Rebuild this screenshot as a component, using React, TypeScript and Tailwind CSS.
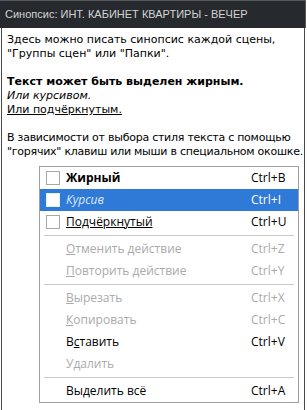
import type { ReactNode } from 'react'

type MenuRow =
  | { kind: 'sep' }
  | {
      kind: 'item'
      label: ReactNode
      shortcut?: string
      check?: boolean
      disabled?: boolean
      active?: boolean
      labelClass?: string
    }

const rows: MenuRow[] = [
  { kind: 'item', label: 'Жирный', shortcut: 'Ctrl+B', check: true, labelClass: 'font-bold' },
  { kind: 'item', label: 'Курсив', shortcut: 'Ctrl+I', check: true, active: true, labelClass: 'italic' },
  { kind: 'item', label: 'Подчёркнутый', shortcut: 'Ctrl+U', check: true, labelClass: 'underline' },
  { kind: 'sep' },
  {
    kind: 'item',
    label: (
      <>
        <span className="underline">О</span>тменить действие
      </>
    ),
    shortcut: 'Ctrl+Z',
    disabled: true,
  },
  {
    kind: 'item',
    label: (
      <>
        <span className="underline">П</span>овторить действие
      </>
    ),
    shortcut: 'Ctrl+Y',
    disabled: true,
  },
  { kind: 'sep' },
  {
    kind: 'item',
    label: (
      <>
        <span className="underline">В</span>ырезать
      </>
    ),
    shortcut: 'Ctrl+X',
    disabled: true,
  },
  {
    kind: 'item',
    label: (
      <>
        <span className="underline">К</span>опировать
      </>
    ),
    shortcut: 'Ctrl+C',
    disabled: true,
  },
  {
    kind: 'item',
    label: (
      <>
        В<span className="underline">с</span>тавить
      </>
    ),
    shortcut: 'Ctrl+V',
  },
  { kind: 'item', label: 'Удалить', disabled: true },
  { kind: 'sep' },
  { kind: 'item', label: 'Выделить всё', shortcut: 'Ctrl+A' },
]

function ContextMenu() {
  return (
    <div className="ml-[37px] mt-[7px] w-[260px] border border-[#a0a0a0] bg-white font-['Open_Sans',sans-serif] text-[12px]">
      {rows.map((row, i) => {
        if (row.kind === 'sep') {
          return (
            <div key={i} className="flex h-[5px] items-center px-[4px]">
              <div className="h-px w-full bg-[#c8c8c8]" />
            </div>
          )
        }
        const color = row.active ? 'text-white' : row.disabled ? 'text-[#aaaaaa]' : 'text-black'
        return (
          <div
            key={i}
            className={`flex h-[22px] items-center ${row.active ? 'bg-[#2f79d7]' : ''} ${color}`}
          >
            <div className="flex w-[20px] justify-end">
              {row.check && (
                <div
                  className={`h-[14px] w-[14px] border bg-white ${
                    row.active ? 'border-[#e8eef8]' : 'border-[#a8a8a8]'
                  }`}
                />
              )}
            </div>
            <span className={`ml-[6px] flex-1 leading-none ${row.labelClass ?? ''} ${row.active ? 'text-[#dce8fa]' : ''}`}>
              {row.label}
            </span>
            <span className="w-[47px] leading-none">{row.shortcut}</span>
          </div>
        )
      })}
    </div>
  )
}

export default function App() {
  return (
    <div className="h-[410px] w-[307px] overflow-hidden bg-white">
      <div className="w-[306px]">
        <div className="flex h-[28px] items-center whitespace-nowrap border-t border-r border-[#55595c] bg-[#262a2e] pl-[5px] font-['Liberation_Sans',sans-serif] text-[11px] text-[#d4d4d4]">
          Синопсис: ИНТ. КАБИНЕТ КВАРТИРЫ - ВЕЧЕР
        </div>
        <div className="ml-[1px] h-[382px] w-[304px] border-x border-[#4a4a4a] bg-white">
          <div className="whitespace-nowrap pl-[5px] pt-[5px] font-['DejaVu_Sans',sans-serif] text-[11px] leading-[14px] text-black">
            <div>Здесь можно писать синопсис каждой сцены,</div>
            <div>"Группы сцен" или "Папки".</div>
            <div className="h-[14px]" />
            <div className="font-bold">Текст может быть выделен жирным.</div>
            <div className="italic">Или курсивом.</div>
            <div className="underline">Или подчёркнутым.</div>
            <div className="h-[14px]" />
            <div className="tracking-[-0.25px]">В зависимости от выбора стиля текста с помощью</div>
            <div className="tracking-[-0.25px]">"горячих" клавиш или мыши в специальном окошке.</div>
          </div>
          <ContextMenu />
        </div>
      </div>
    </div>
  )
}
